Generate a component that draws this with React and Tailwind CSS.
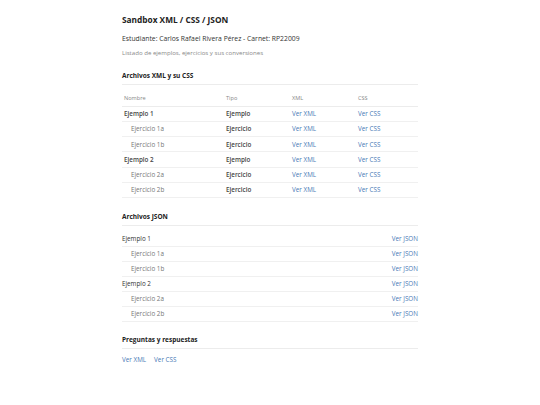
import React from 'react';

const rows = [
  { name: 'Ejemplo 1', tipo: 'Ejemplo', sub: false },
  { name: 'Ejercicio 1a', tipo: 'Ejercicio', sub: true },
  { name: 'Ejercicio 1b', tipo: 'Ejercicio', sub: true },
  { name: 'Ejemplo 2', tipo: 'Ejemplo', sub: false },
  { name: 'Ejercicio 2a', tipo: 'Ejercicio', sub: true },
  { name: 'Ejercicio 2b', tipo: 'Ejercicio', sub: true },
];

const Link = ({ children }) => (
  <a href="#" className="text-[#4a7ab6]">
    {children}
  </a>
);

const SectionTitle = ({ children }) => (
  <h2 className="border-b border-[#ececec] pb-[3px] text-[6.5px] leading-[10px] font-bold text-[#222]">
    {children}
  </h2>
);

const App = () => {
  return (
    <div
      className="min-h-screen bg-white"
      style={{ fontFamily: '"Open Sans", "Liberation Sans", sans-serif' }}
    >
      <div className="mx-auto w-[296px] pt-[14px]">
        <h1 className="text-[8.3px] leading-[12px] font-bold text-[#222]">
          Sandbox XML / CSS / JSON
        </h1>
        <p className="mt-[8px] text-[6.8px] leading-[10px] text-[#333]">
          Estudiante: Carlos Rafael Rivera Pérez - Carnet: RP22009
        </p>
        <p className="mt-[5px] text-[6.1px] leading-[8px] text-[#888]">
          Listado de ejemplos, ejercicios y sus conversiones
        </p>

        <section className="mt-[14px]">
          <SectionTitle>Archivos XML y su CSS</SectionTitle>
          <table className="mt-[6px] w-full border-collapse text-[6.3px]">
            <thead>
              <tr className="h-[15px] border-b border-[#ececec] text-left text-[5.6px] text-[#888]">
                <th className="w-[104px] pl-[2px] font-normal">Nombre</th>
                <th className="w-[66px] font-normal">Tipo</th>
                <th className="w-[66px] font-normal">XML</th>
                <th className="font-normal">CSS</th>
              </tr>
            </thead>
            <tbody>
              {rows.map((r) => (
                <tr key={r.name} className="h-[15.3px] border-b border-[#f0f0f0]">
                  <td
                    className={
                      r.sub ? 'pl-[9px] text-[#777]' : 'pl-[2px] font-semibold text-[#444]'
                    }
                  >
                    {r.name}
                  </td>
                  <td className="font-semibold text-[#444]">{r.tipo}</td>
                  <td>
                    <Link>Ver XML</Link>
                  </td>
                  <td>
                    <Link>Ver CSS</Link>
                  </td>
                </tr>
              ))}
            </tbody>
          </table>
        </section>

        <section className="mt-[13.5px]">
          <SectionTitle>Archivos JSON</SectionTitle>
          <ul className="mt-[6px] text-[6.3px]">
            {rows.map((r) => (
              <li
                key={r.name}
                className="flex h-[15px] items-center justify-between border-b border-[#f0f0f0]"
              >
                <span className={r.sub ? 'pl-[9px] text-[#777]' : 'text-[#333]'}>{r.name}</span>
                <Link>Ver JSON</Link>
              </li>
            ))}
          </ul>
        </section>

        <section className="mt-[13px]">
          <SectionTitle>Preguntas y respuestas</SectionTitle>
          <div className="mt-[6px] flex gap-[8px] text-[6.3px] leading-[10px]">
            <Link>Ver XML</Link>
            <Link>Ver CSS</Link>
          </div>
        </section>
      </div>
    </div>
  );
};

export default App;
